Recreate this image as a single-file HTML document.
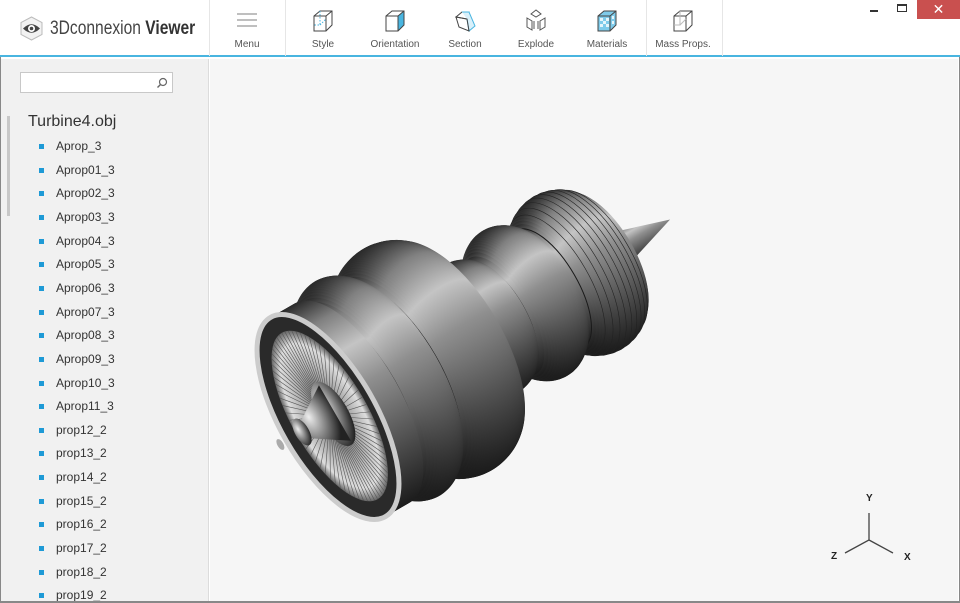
<!DOCTYPE html>
<html><head><meta charset="utf-8"><style>
*{margin:0;padding:0;box-sizing:border-box}
body{width:960px;height:603px;overflow:hidden;background:#fff;font-family:"Liberation Sans",sans-serif;position:relative}
#hdr{position:absolute;left:0;top:0;width:960px;height:57px;background:#fff;border-bottom:2px solid #49b5e0}
.sep{position:absolute;top:0;height:56px;width:1px;background:#e6e6e6}
.tb{position:absolute;top:0;width:80px;text-align:center;font-size:10px;color:#555}
.tb svg{position:absolute;left:28px;top:9px}
.tb span{position:absolute;top:39px;left:0;width:80px}
#side{position:absolute;left:1px;top:59px;width:208px;height:542px;background:#f1f1f1;border-right:1px solid #dcdcdc;overflow:hidden}
#view{position:absolute;left:210px;top:59px;width:748px;height:542px;background:#f6f6f6}
.it{position:absolute;left:55px;font-size:12px;color:#333}
.bl{position:absolute;left:38px;width:5px;height:5px;background:#1e9ad6}
</style></head><body>
<div style="position:absolute;left:0;top:0;width:1px;height:603px;background:#888"></div>
<div style="position:absolute;right:0;top:0;width:1px;height:603px;background:#888"></div>
<div style="position:absolute;left:0;bottom:0;width:960px;height:2px;background:#888"></div>
<div id="hdr">
<svg style="position:absolute;left:19px;top:16px" width="25" height="25" viewBox="0 0 25 25"><path d="M12.5 1 L23 6.5 V18.5 L12.5 24 L2 18.5 V6.5Z" fill="#f2f2f2" stroke="#bbb"/><path d="M4 12.5 Q12.5 4 21 12.5 Q12.5 21 4 12.5Z" fill="#444"/><circle cx="12.5" cy="12.5" r="3.5" fill="#fff"/><circle cx="12.5" cy="12.5" r="1.8" fill="#444"/></svg>
<div style="position:absolute;left:50px;top:18px;font-size:19px;color:#444;white-space:nowrap;transform:scaleX(0.82);transform-origin:left">3Dconnexion <b style="font-weight:bold;color:#333">Viewer</b></div>
<div class="sep" style="left:209px"></div><div class="sep" style="left:285px"></div><div class="sep" style="left:646px"></div><div class="sep" style="left:722px"></div>
<div class="tb" style="left:207px"><svg width="24" height="22"><path d="M2 5H22M2 11H22M2 17H22" stroke="#aaa" stroke-width="1.5"/></svg><span>Menu</span></div>
<div class="tb" style="left:283px"><svg width="24" height="24"><path d="M3 7L9 2H21V16L15 22H3Z M3 7H15V22 M15 7L21 2" fill="none" stroke="#444"/><path d="M9 2V16H3 M9 16L15 10" stroke="#49b5e0" stroke-dasharray="1.5 1.5" fill="none"/></svg><span>Style</span></div>
<div class="tb" style="left:355px"><svg width="24" height="24"><path d="M15 7L21 2V16L15 22Z" fill="#49b5e0"/><path d="M3 7L9 2H21V16L15 22H3Z M3 7H15V22 M15 7L21 2" fill="none" stroke="#444"/></svg><span>Orientation</span></div>
<div class="tb" style="left:425px"><svg width="24" height="24"><path d="M3 8L9 3H16L14 10Z" fill="none" stroke="#444"/><path d="M9 3H16L22 17L16 22L14 10" fill="#d9f0fa" stroke="#49b5e0"/><path d="M3 8L14 10L16 22L6 18Z" fill="none" stroke="#444"/></svg><span>Section</span></div>
<div class="tb" style="left:496px"><svg width="24" height="24"><path d="M7 5L12 1L17 5L12 8Z M3 9L8 12V21L3 18Z M21 9L16 12V21L21 18Z M10 12V20 M14 12V20" fill="none" stroke="#555"/></svg><span>Explode</span></div>
<div class="tb" style="left:567px"><svg width="24" height="24"><path d="M3 7L9 2H21V16L15 22H3Z" fill="#7fcbea" stroke="#444"/><path d="M3 7H15V22 M15 7L21 2" fill="none" stroke="#444"/><path d="M5 9h3v3h-3zM11 9h3v3h-3zM8 12h3v3h-3zM5 15h3v3h-3zM11 15h3v3h-3zM17 7h2v3h-2zM17 12h2v3h-2z" fill="#fff" opacity=".8"/></svg><span>Materials</span></div>
<div class="tb" style="left:643px"><svg width="24" height="24"><path d="M3 7L9 2H21V16L15 22H3Z M3 7H15V22 M15 7L21 2" fill="none" stroke="#444"/><path d="M9 2V16H3 M9 16L15 10" stroke="#bbb" fill="none"/></svg><span>Mass Props.</span></div>
<div style="position:absolute;left:870px;top:10px;width:8px;height:1.5px;background:#333"></div>
<div style="position:absolute;left:897px;top:4px;width:10px;height:8px;border:1px solid #333;border-top-width:2px"></div>
<div style="position:absolute;left:917px;top:0;width:43px;height:19px;background:#c9504f;color:#fff;text-align:center;font-size:14px;line-height:19px">✕</div>
</div>
<div id="side">
<div style="position:absolute;left:19px;top:13px;width:153px;height:21px;background:#fff;border:1px solid #c8c8c8"><svg style="position:absolute;right:4px;top:4px" width="12" height="12"><circle cx="7" cy="5" r="3.5" fill="none" stroke="#666" stroke-width="1.2"/><path d="M4.5 7.5L1.5 10.5" stroke="#666" stroke-width="1.4"/></svg></div>
<div style="position:absolute;left:6px;top:57px;width:3px;height:100px;background:#c8c8c8"></div>
<div style="position:absolute;left:27px;top:54px;font-size:16px;color:#333">Turbine4.obj</div>
<div id="list"></div>
</div>
<div id="view">
<svg width="748" height="542" style="position:absolute;left:0;top:0">
<defs>
<linearGradient id="g" x1="0" y1="0" x2="0" y2="1"><stop offset="0" stop-color="#2a2a2a"/><stop offset=".12" stop-color="#808080"/><stop offset=".28" stop-color="#c4c4c4"/><stop offset=".45" stop-color="#8f8f8f"/><stop offset=".75" stop-color="#505050"/><stop offset="1" stop-color="#1c1c1c"/></linearGradient>
<radialGradient id="fan" cx=".5" cy=".5" r=".5"><stop offset="0" stop-color="#555"/><stop offset=".5" stop-color="#aaa"/><stop offset=".85" stop-color="#ddd"/><stop offset="1" stop-color="#666"/></radialGradient>
<radialGradient id="cone" cx=".35" cy=".35" r=".7"><stop offset="0" stop-color="#eee"/><stop offset=".5" stop-color="#888"/><stop offset="1" stop-color="#222"/></radialGradient>
</defs>
<g id="eng" transform="translate(118,358) rotate(-30)"></g>
<path d="M659 454V481L635 494M659 481L683 494" fill="none" stroke="#444" stroke-width="1.3"/>
<g font-size="10" font-weight="bold" fill="#222"><text x="656" y="442">Y</text><text x="621" y="500">Z</text><text x="694" y="501">X</text></g>
</svg>
</div>
<script>
var names=["Aprop_3","Aprop01_3","Aprop02_3","Aprop03_3","Aprop04_3","Aprop05_3","Aprop06_3","Aprop07_3","Aprop08_3","Aprop09_3","Aprop10_3","Aprop11_3","prop12_2","prop13_2","prop14_2","prop15_2","prop16_2","prop17_2","prop18_2","prop19_2"];
var h="";names.forEach(function(n,i){var y=80+i*23.65;h+='<div class="bl" style="top:'+(y+5)+'px"></div><div class="it" style="top:'+y+'px">'+n+'</div>';});
document.getElementById('list').innerHTML=h;
function bump(x,a,b,base,amp){return base+amp*Math.sqrt(Math.max(0,Math.sin((x-a)/(b-a)*Math.PI)));}
function r(x){
 if(x<30)return 115;
 if(x<34)return 104;
 if(x<80)return bump(x,34,80,100,24);
 if(x<150)return bump(x,80,150,104,24);
 if(x<200)return bump(x,150,200,58,16);
 if(x<255)return bump(x,200,255,58,26);
 if(x<322)return bump(x,255,322,62,26);
 if(x<330)return 40; return 0;}
var s='<polygon points="325,-22 395,0 325,22" fill="url(#g)"/>';
for(var x=328;x>=0;x-=2){var R=r(x);if(!R)continue;var rx=R*0.42;
 var st=(x>262&&x<318&&x%6==0)?' stroke="#222" stroke-width="0.6"':'';
 if(x==150||x==80||x==34||x==200||x==256)st=' stroke="#1a1a1a" stroke-width="1"';
 s+='<ellipse cx="'+x+'" cy="0" rx="'+rx.toFixed(1)+'" ry="'+R.toFixed(1)+'" fill="url(#g)"'+st+'/>';}
s+='<ellipse cx="0" cy="0" rx="48" ry="115" fill="#2a2a2a" stroke="#ccc" stroke-width="5"/>';
s+='<ellipse cx="2" cy="0" rx="38" ry="96" fill="url(#fan)"/>';
var bl='';for(var a=0;a<360;a+=5){var t=a*Math.PI/180;bl+='M2 0L'+(2+38*Math.cos(t)).toFixed(1)+' '+(96*Math.sin(t)).toFixed(1);}
s+='<path d="'+bl+'" stroke="#555" stroke-width="0.6"/>';
s+='<ellipse cx="6" cy="0" rx="15" ry="36" fill="url(#cone)"/><path d="M8 -32 L-30 -7 L-30 7 L8 32Z" fill="url(#cone)"/><ellipse cx="-30" cy="0" rx="7" ry="15" fill="url(#cone)"/>';
s+='<ellipse cx="-55" cy="0" rx="3" ry="6" fill="#aaa"/>';
document.getElementById('eng').innerHTML=s;
</script>
</body></html>
